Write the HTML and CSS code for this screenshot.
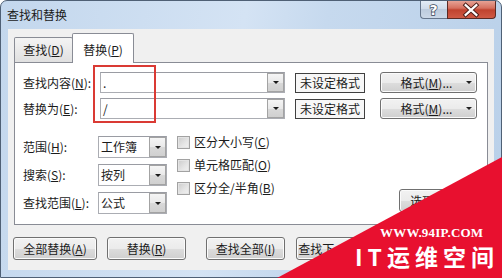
FILE: index.html
```html
<!DOCTYPE html>
<html lang="zh-CN">
<head>
<meta charset="utf-8">
<title>查找和替换</title>
<link rel="stylesheet" href="styles.css">
</head>
<body>
<div class="window">
  <div class="titlebar">
    <span class="title">查找和替换</span>
    <div class="caption">
      <div class="cap-help">
        <svg width="27" height="18" viewBox="0 0 27 18"><text x="13.5" y="15" text-anchor="middle" class="q">?</text></svg>
      </div>
      <div class="cap-close">
        <svg width="49" height="18" viewBox="0 0 49 18">
          <path d="M19 5 L30 15 M30 5 L19 15" stroke="#4a1d18" stroke-width="4.2" stroke-linecap="square"/>
          <path d="M19 5 L30 15 M30 5 L19 15" stroke="#ffffff" stroke-width="2.2" stroke-linecap="square"/>
        </svg>
      </div>
    </div>
  </div>
  <div class="client">
    <div class="tabs">
      <div class="tab">查找(<u>D</u>)</div>
      <div class="tab active">替换(<u>P</u>)</div>
    </div>
    <div class="panel">
      <div class="row">
        <span class="lbl wide">查找内容(<u>N</u>):</span>
        <div class="combo big"><span class="val">.</span><span class="dd"><i class="tri"></i></span></div>
        <div class="fmtbox">未设定格式</div>
        <button class="btn fmt"><span class="fmt-text">格式(<u>M</u>)...</span><i class="tri"></i></button>
      </div>
      <div class="row second">
        <span class="lbl wide">替换为(<u>E</u>):</span>
        <div class="combo big"><span class="val">/</span><span class="dd"><i class="tri"></i></span></div>
        <div class="fmtbox">未设定格式</div>
        <button class="btn fmt"><span class="fmt-text">格式(<u>M</u>)...</span><i class="tri"></i></button>
      </div>
      <div class="options">
        <div class="selects">
          <span class="lbl">范围(<u>H</u>):</span>
          <div class="combo small"><span class="val">工作簿</span><span class="dd"><i class="tri"></i></span></div>
          <span class="lbl">搜索(<u>S</u>):</span>
          <div class="combo small"><span class="val">按列</span><span class="dd"><i class="tri"></i></span></div>
          <span class="lbl">查找范围(<u>L</u>):</span>
          <div class="combo small"><span class="val">公式</span><span class="dd"><i class="tri"></i></span></div>
        </div>
        <div class="checks">
          <label class="check"><span class="box"></span>区分大小写(<u>C</u>)</label>
          <label class="check"><span class="box"></span>单元格匹配(<u>O</u>)</label>
          <label class="check"><span class="box"></span>区分全/半角(<u>B</u>)</label>
        </div>
        <button class="btn opt">选项(<u>T</u>) &lt;&lt;</button>
      </div>
    </div>
    <div class="actions">
      <button class="btn act first">全部替换(<u>A</u>)</button>
      <button class="btn act">替换(<u>R</u>)</button>
      <button class="btn act far">查找全部(<u>I</u>)</button>
      <button class="btn act">查找下一个(<u>F</u>)</button>
      <button class="btn act">关闭</button>
    </div>
  </div>
</div>
<div class="annot"></div>
<svg class="wm-tri" width="502" height="278" viewBox="0 0 502 278"><polygon points="277,278 502,157 502,278" fill="#e8102f"/></svg>
<div class="wm-url">WWW.94IP.COM</div>
<div class="wm-name">IT运维空间</div>
</body>
</html>
```
FILE: styles.css
```css
* { box-sizing: border-box; margin: 0; padding: 0; }
html, body { width: 502px; height: 278px; overflow: hidden; }
body {
  position: relative;
  font-family: "Noto Sans CJK SC", "Microsoft YaHei", sans-serif;
  font-size: 12px;
  color: #1b1b1b;
  background: #ffffff;
}
u { text-decoration: underline; text-underline-offset: 1px; }

.window {
  width: 502px;
  height: 278px;
  border: 1px solid #4f6075;
  border-radius: 7px 7px 0 0;
  background: linear-gradient(100deg, #c3d7ed 0%, #d4e3f4 45%, #c6d9ee 60%, #b9d0e9 100%);
  padding: 0 7px 7px 7px;
  display: flex;
  flex-direction: column;
  overflow: hidden;
}

.titlebar {
  height: 28px;
  flex: none;
  display: flex;
  align-items: flex-start;
}
.title {
  margin-left: -1px;
  padding-top: 6px;
  line-height: 16px;
  color: #1a1a1a;
}
.caption {
  margin-left: auto;
  margin-right: -2px;
  margin-top: -1px;
  display: flex;
}
.cap-help, .cap-close { height: 19px; display: flex; }
.cap-help {
  width: 27px;
  border: 1px solid #66768c;
  border-top: none;
  border-right: none;
  border-radius: 0 0 0 4px;
  background: linear-gradient(#e6eef7, #cfdbea 50%, #bccbdd 51%, #cbd8e7);
}
.cap-help svg { margin-left: -1px; }
.q {
  font-family: "DejaVu Sans", sans-serif;
  font-size: 14px;
  font-weight: bold;
  fill: #ffffff;
  stroke: #3a4658;
  stroke-width: 1.4px;
  paint-order: stroke;
}
.cap-close {
  width: 49px;
  border: 1px solid #5b2a24;
  border-top: none;
  border-radius: 0 0 4px 0;
  background: linear-gradient(#e9a99c, #d5705f 45%, #c0432f 55%, #cf5a45);
}
.cap-close svg { margin-left: -1px; }

.client {
  flex: 1;
  background: #f0f0f0;
  padding: 4px 6px 0 6px;
  display: flex;
  flex-direction: column;
}

.tabs {
  height: 29px;
  display: flex;
  align-items: flex-end;
  flex: none;
}
.tab {
  width: 59px;
  height: 25px;
  border: 1px solid #898c95;
  border-bottom: none;
  border-radius: 2px 2px 0 0;
  background: linear-gradient(#f4f4f4, #eaeaea 50%, #e0e0e0);
  display: flex;
  align-items: center;
  justify-content: center;
  line-height: 14px;
}
.tab.active {
  width: 62px;
  height: 30px;
  margin-left: -1px;
  margin-bottom: -1px;
  background: #ffffff;
  position: relative;
  z-index: 1;
  padding-top: 3px;
}

.panel {
  height: 163px;
  flex: none;
  border: 1px solid #898c95;
  background: #ffffff;
  padding: 9px 10px 0 8px;
}

.row {
  display: flex;
  align-items: center;
  height: 21px;
}
.row.second { margin-top: 5px; }

.lbl { line-height: 14px; white-space: nowrap; }
.lbl.wide { width: 77px; }

.combo {
  display: flex;
  background: #ffffff;
  border: 1px solid #abadb3;
  border-top-color: #9a9ca3;
}
.combo .val {
  flex: 1;
  padding-left: 2px;
  display: flex;
  align-items: center;
  line-height: 14px;
}
.combo .dd {
  width: 17px;
  border: 1px solid #a3a3a3;
  background: linear-gradient(#f5f5f5, #e9e9e9 50%, #d9d9d9 51%, #d0d0d0);
  display: flex;
  align-items: center;
  justify-content: center;
}
.combo.big { width: 185px; height: 21px; }
.combo.small { width: 69px; height: 22px; }

.tri {
  width: 0;
  height: 0;
  border-left: 3px solid transparent;
  border-right: 3px solid transparent;
  border-top: 3px solid #1a1a1a;
}

.fmtbox {
  width: 70px;
  height: 20px;
  margin-left: 10px;
  border: 1px solid #404040;
  background: #f7f7f7;
  display: flex;
  align-items: center;
  justify-content: center;
  line-height: 14px;
}

.btn {
  font: inherit;
  color: #1b1b1b;
  border: 1px solid #707070;
  border-radius: 3px;
  background: linear-gradient(#f2f2f2 0%, #ebebeb 50%, #dddddd 51%, #cfcfcf 100%);
  box-shadow: inset 0 0 0 1px #fbfbfb;
  display: flex;
  align-items: center;
  justify-content: center;
  line-height: 14px;
  white-space: nowrap;
}
.btn.fmt {
  width: 97px;
  height: 21px;
  margin-left: 15px;
  padding: 0 4px 0 10px;
}
.fmt-text { flex: 1; text-align: center; }
.btn.fmt .tri { margin-left: 4px; border-top-color: #222; }

.options {
  display: flex;
  align-items: flex-start;
  margin-top: 17px;
  height: 78px;
}
.selects {
  display: grid;
  grid-template-columns: 75px 69px;
  grid-auto-rows: 22px;
  row-gap: 6px;
  align-items: center;
}
.checks {
  margin-left: 10px;
  margin-top: -2px;
  display: flex;
  flex-direction: column;
  gap: 7px;
}
.check {
  height: 16px;
  display: flex;
  align-items: center;
  line-height: 14px;
  white-space: nowrap;
}
.box {
  width: 13px;
  height: 13px;
  margin-right: 4px;
  border: 1px solid #a2a2a2;
  background: linear-gradient(135deg, #cbcbcb, #e6e6e6 60%, #f1f1f1);
  box-shadow: inset 0 0 0 1px #e4e4e4;
}
.btn.opt {
  margin-left: auto;
  align-self: flex-end;
  width: 78px;
  height: 23px;
  margin-bottom: 2px;
}

.actions {
  margin-top: 12px;
  display: flex;
  gap: 11px;
}
.btn.act { width: 79px; height: 23px; flex: none; }
.btn.act.first { width: 84px; margin-left: -1px; margin-right: -1px; }
.btn.act.far { margin-left: 9px; }

.annot {
  position: absolute;
  left: 93px;
  top: 65px;
  width: 63px;
  height: 58px;
  border: 2px solid #da3a34;
}
.wm-tri { position: absolute; left: 0; top: 0; }
.wm-url {
  position: absolute;
  left: 380px;
  top: 226px;
  font-family: "Liberation Serif", serif;
  font-weight: bold;
  font-size: 13px;
  line-height: 13px;
  color: #ffffff;
  letter-spacing: 0.2px;
  white-space: nowrap;
}
.wm-name {
  position: absolute;
  left: 355px;
  top: 245px;
  font-family: "Noto Sans CJK SC", sans-serif;
  font-weight: bold;
  font-size: 23px;
  line-height: 23px;
  letter-spacing: 5px;
  color: #ffffff;
  white-space: nowrap;
}
```
